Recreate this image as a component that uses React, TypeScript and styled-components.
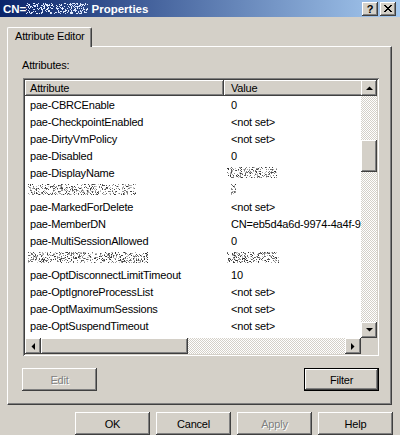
import React from "react";
import styled, { createGlobalStyle, css } from "styled-components";

const GlobalStyle = createGlobalStyle`
  html, body {
    margin: 0;
    padding: 0;
    background: #d4d0c8;
  }
  body {
    font-family: "Liberation Sans", Arial, sans-serif;
    font-size: 11px;
    letter-spacing: -0.2px;
    color: #000000;
  }
`;

// classic 3d edges
const raised = css`
  box-shadow: inset -1px -1px #404040, inset 1px 1px #ffffff,
    inset -2px -2px #808080, inset 2px 2px #d4d0c8;
`;

const sunken = css`
  box-shadow: inset 1px 1px #808080, inset -1px -1px #ffffff,
    inset 2px 2px #404040, inset -2px -2px #d4d0c8;
`;

const checker = css`
  background-color: #ffffff;
  background-image: repeating-conic-gradient(#d4d0c8 0 25%, #ffffff 0 50%);
  background-size: 2px 2px;
`;

const Window = styled.div`
  width: 400px;
  height: 435px;
  overflow: hidden;
  background: #d4d0c8;
  display: flex;
  flex-direction: column;
`;

const TitleBar = styled.div`
  height: 17px;
  flex-shrink: 0;
  display: flex;
  align-items: center;
  padding: 0 4px 0 3px;
  background: linear-gradient(to right, #0a246a, #a6caf0);
`;

const Title = styled.div`
  display: flex;
  align-items: center;
  color: #ffffff;
  font-weight: bold;
  font-size: 11.5px;
  letter-spacing: 0;
  white-space: nowrap;
`;

const CaptionButtons = styled.div`
  margin-left: auto;
  display: flex;
  gap: 2px;
`;

const CaptionButton = styled.div`
  width: 16px;
  height: 14px;
  box-sizing: border-box;
  background: #d4d0c8;
  ${raised};
  display: flex;
  align-items: center;
  justify-content: center;
  font-weight: bold;
  font-size: 11px;
  line-height: 14px;
`;

const Body = styled.div`
  padding: 10px 0 0 7px;
`;

const TabStrip = styled.div`
  display: flex;
  height: 19px;
`;

const Tab = styled.div`
  position: relative;
  z-index: 1;
  width: 85px;
  height: 20px;
  box-sizing: border-box;
  background: #d4d0c8;
  border-top: 1px solid #ffffff;
  border-left: 1px solid #ffffff;
  border-right: 1px solid #404040;
  border-radius: 2px 2px 0 0;
  box-shadow: inset -1px 0 #808080;
  padding-left: 7px;
  line-height: 17px;
`;

const Panel = styled.div`
  width: 385px;
  height: 359px;
  box-sizing: border-box;
  border-top: 1px solid #ffffff;
  border-left: 1px solid #ffffff;
  border-right: 1px solid #404040;
  border-bottom: 1px solid #404040;
  box-shadow: inset -1px -1px #808080;
  padding: 12px 0 0 14px;
`;

const Label = styled.div`
  line-height: 13px;
  height: 13px;
`;

const ListBox = styled.div`
  margin: 6px 0 0 1px;
  width: 356px;
  height: 278px;
  box-sizing: border-box;
  padding: 2px;
  background: #d4d0c8;
  ${sunken};
  display: grid;
  grid-template-columns: 336px 16px;
  grid-template-rows: 258px 16px;
`;

const ListContent = styled.div`
  background: #ffffff;
  overflow: hidden;
`;

const HeaderRow = styled.div`
  display: flex;
  height: 16px;
`;

const HeaderCell = styled.div<{ $w: number; $pad: number }>`
  flex: 0 0 ${(p) => p.$w}px;
  box-sizing: border-box;
  padding-left: ${(p) => p.$pad}px;
  line-height: 16px;
  background: #d4d0c8;
  ${raised};
  white-space: nowrap;
`;

const Row = styled.div`
  display: flex;
  align-items: center;
  height: 17px;
  white-space: nowrap;
`;

const Cell = styled.div<{ $w?: number; $pad: number }>`
  flex: 0 0 ${(p) => (p.$w ? `${p.$w}px` : "auto")};
  box-sizing: border-box;
  padding-left: ${(p) => p.$pad}px;
  display: flex;
  align-items: center;
  height: 17px;
`;

const VScroll = styled.div`
  display: flex;
  flex-direction: column;
  ${checker};
`;

const HScroll = styled.div`
  display: flex;
  ${checker};
`;

const Corner = styled.div`
  background: #d4d0c8;
`;

const ArrowButton = styled.div`
  flex: 0 0 16px;
  width: 16px;
  height: 16px;
  box-sizing: border-box;
  background: #d4d0c8;
  ${raised};
  display: flex;
  align-items: center;
  justify-content: center;
`;

const Track = styled.div`
  flex: 1;
  display: flex;
`;

const VTrack = styled(Track)`
  flex-direction: column;
`;

const Thumb = styled.div<{ $size: number; $offset: number }>`
  background: #d4d0c8;
  ${raised};
  box-sizing: border-box;
`;

const VThumb = styled(Thumb)`
  height: ${(p) => p.$size}px;
  margin-top: ${(p) => p.$offset}px;
`;

const HThumb = styled(Thumb)`
  width: ${(p) => p.$size}px;
  margin-left: ${(p) => p.$offset}px;
`;

const ActionRow = styled.div`
  width: 357px;
  margin-top: 12px;
  display: flex;
  justify-content: space-between;
`;

const Button = styled.div<{ $default?: boolean; $disabled?: boolean }>`
  width: 75px;
  height: 23px;
  box-sizing: border-box;
  background: #d4d0c8;
  ${raised};
  display: flex;
  align-items: center;
  justify-content: center;
  ${(p) =>
    p.$default &&
    css`
      border: 1px solid #000000;
    `}
  ${(p) =>
    p.$disabled &&
    css`
      color: #808080;
      text-shadow: 1px 1px #ffffff;
    `}
`;

const Footer = styled.div`
  margin-top: 7px;
  display: flex;
  justify-content: flex-end;
  gap: 6px;
  padding-right: 7px;
`;

// grainy block standing in for hidden text
const Smudge = ({ w, h = 11, seed, light }: { w: number; h?: number; seed: number; light?: boolean }) => {
  let s = seed;
  const rnd = () => {
    s = (Math.imul(s, 1103515245) + 12345) >>> 0;
    return (s >>> 8) / 16777216;
  };
  const dots: React.ReactNode[] = [];
  for (let y = 0; y < h; y++) {
    for (let x = 0; x < w; x++) {
      if (rnd() < 0.34) {
        const g = Math.floor(rnd() * 170);
        const fill = light ? `rgb(${200 + g / 4},${215 + g / 5},255)` : `rgb(${40 + g},${40 + g},${40 + g})`;
        dots.push(<rect key={`${x}-${y}`} x={x} y={y} width={1} height={1} fill={fill} />);
      }
    }
  }
  return (
    <svg width={w} height={h} style={{ display: "block" }} shapeRendering="crispEdges">
      {dots}
    </svg>
  );
};

const Arrow = ({ dir }: { dir: "up" | "down" | "left" | "right" }) => {
  const pts = {
    up: "0,4 7,4 3.5,0.5",
    down: "0,0 7,0 3.5,3.5",
    left: "4,0 4,7 0.5,3.5",
    right: "0,0 0,7 3.5,3.5",
  }[dir];
  const vertical = dir === "up" || dir === "down";
  return (
    <svg width={vertical ? 7 : 4} height={vertical ? 4 : 7}>
      <polygon points={pts} fill="#000000" />
    </svg>
  );
};

type Attr = { name?: string; value?: string; nameMask?: number; valueMask?: number };

const attributes: Attr[] = [
  { name: "pae-CBRCEnable", value: "0" },
  { name: "pae-CheckpointEnabled", value: "<not set>" },
  { name: "pae-DirtyVmPolicy", value: "<not set>" },
  { name: "pae-Disabled", value: "0" },
  { name: "pae-DisplayName", valueMask: 50 },
  { nameMask: 108, valueMask: 5 },
  { name: "pae-MarkedForDelete", value: "<not set>" },
  { name: "pae-MemberDN", value: "CN=eb5d4a6d-9974-4a4f-9c2e-7d1a" },
  { name: "pae-MultiSessionAllowed", value: "0" },
  { nameMask: 120, valueMask: 52 },
  { name: "pae-OptDisconnectLimitTimeout", value: "10" },
  { name: "pae-OptIgnoreProcessList", value: "<not set>" },
  { name: "pae-OptMaximumSessions", value: "<not set>" },
  { name: "pae-OptSuspendTimeout", value: "<not set>" },
  { name: "pae-OptUnlockEnabled", value: "" },
];

export default function App() {
  return (
    <>
      <GlobalStyle />
      <Window>
        <TitleBar>
          <Title>
            CN=
            <Smudge w={62} h={11} seed={7} light />
            &nbsp;Properties
          </Title>
          <CaptionButtons>
            <CaptionButton>?</CaptionButton>
            <CaptionButton>
              <svg width="8" height="7" shapeRendering="crispEdges">
                <path d="M0 0h2l2 2.5 2-2.5h2l-3 3.5 3 3.5h-2l-2-2.5-2 2.5h-2l3-3.5z" fill="#000000" />
              </svg>
            </CaptionButton>
          </CaptionButtons>
        </TitleBar>
        <Body>
          <TabStrip>
            <Tab>Attribute Editor</Tab>
          </TabStrip>
          <Panel>
            <Label>Attributes:</Label>
            <ListBox>
              <ListContent>
                <HeaderRow>
                  <HeaderCell $w={199} $pad={5}>Attribute</HeaderCell>
                  <HeaderCell $w={200} $pad={7}>Value</HeaderCell>
                </HeaderRow>
                {attributes.map((a, i) => (
                  <Row key={i}>
                    <Cell $w={199} $pad={a.nameMask ? 3 : 5}>
                      {a.nameMask ? <Smudge w={a.nameMask} seed={31 + i} /> : a.name}
                    </Cell>
                    <Cell $pad={a.valueMask && a.valueMask > 10 ? 3 : 7}>
                      {a.valueMask ? <Smudge w={a.valueMask} seed={97 + i} /> : a.value}
                    </Cell>
                  </Row>
                ))}
              </ListContent>
              <VScroll>
                <ArrowButton>
                  <Arrow dir="up" />
                </ArrowButton>
                <VTrack>
                  <VThumb $size={32} $offset={44} />
                </VTrack>
                <ArrowButton>
                  <Arrow dir="down" />
                </ArrowButton>
              </VScroll>
              <HScroll>
                <ArrowButton>
                  <Arrow dir="left" />
                </ArrowButton>
                <Track>
                  <HThumb $size={147} $offset={0} />
                </Track>
                <ArrowButton>
                  <Arrow dir="right" />
                </ArrowButton>
              </HScroll>
              <Corner />
            </ListBox>
            <ActionRow>
              <Button $disabled>Edit</Button>
              <Button $default>Filter</Button>
            </ActionRow>
          </Panel>
        </Body>
        <Footer>
          <Button>OK</Button>
          <Button>Cancel</Button>
          <Button $disabled>Apply</Button>
          <Button>Help</Button>
        </Footer>
      </Window>
    </>
  );
}
